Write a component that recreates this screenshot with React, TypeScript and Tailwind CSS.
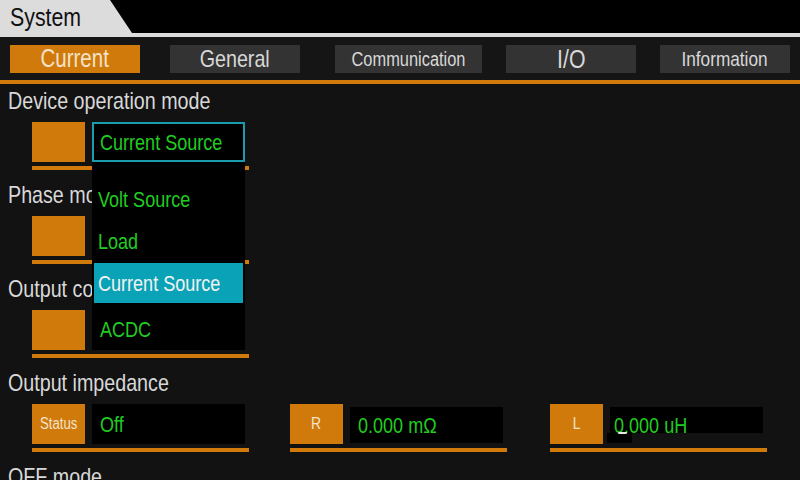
import React from "react";

const FONT = "font-['Liberation_Sans','Arial',sans-serif]";

function N({ children, center = false }: { children: React.ReactNode; center?: boolean }) {
  return (
    <span className={`inline-block whitespace-nowrap scale-x-[0.82] ${center ? "origin-center" : "origin-left"}`}>
      {children}
    </span>
  );
}

function Label({ text }: { text: string }) {
  return (
    <div className="h-[24px] text-[24px] leading-[24px] text-[#d8d8d8] whitespace-nowrap">
      <N>{text}</N>
    </div>
  );
}

function Underline() {
  return <div className="mt-[4px] h-[4px] bg-[#d07a0c] w-[217px]" />;
}

function ValueBox({ text, className = "" }: { text: string; className?: string }) {
  return (
    <div className={`w-[153px] bg-black flex items-center pl-[8px] text-[22px] text-[#20cc20] ${className}`}>
      <N>{text}</N>
    </div>
  );
}

export default function App() {
  const tabs = [
    { t: "Current", cls: "ml-[10px] w-[130px] bg-[#d07a0c] text-[#f3e2c8] text-[25px]" },
    { t: "General", cls: "ml-[30px] w-[130px] bg-[#333333] text-[#d8d8d8] text-[24px]" },
    { t: "Communication", cls: "ml-[35px] w-[147px] bg-[#333333] text-[#d8d8d8] text-[20px]" },
    { t: "I/O", cls: "ml-[24px] w-[130px] bg-[#333333] text-[#d8d8d8] text-[26px]" },
    { t: "Information", cls: "ml-[24px] w-[130px] bg-[#333333] text-[#d8d8d8] text-[21px]" },
  ];
  return (
    <div className={`relative w-[800px] h-[480px] overflow-hidden bg-[#121212] ${FONT}`}>
      <div className="h-[33px] bg-black">
        <div className="h-full w-[132px] bg-[#dcdcdc] [clip-path:polygon(0_0,110px_0,132px_100%,0_100%)] pl-[10px] text-[26px] leading-[34px] text-[#111111]">
          <N>System</N>
        </div>
      </div>
      <div className="h-[4px] bg-[#dcdcdc]" />
      <div className="h-[43px] bg-[#151515] flex pt-[8px]">
        {tabs.map((x) => (
          <div key={x.t} className={`h-[28px] flex items-center justify-center leading-none pb-[1px] ${x.cls}`}>
            <N center>{x.t}</N>
          </div>
        ))}
      </div>
      <div className="h-[4px] bg-[#d07a0c]" />

      <div className="pl-[8px] pt-[5px]">
        {/* Section 1 */}
        <div className="h-[94px]">
          <Label text="Device operation mode" />
          <div className="ml-[24px] mt-[9px] flex gap-[7px] h-[40px]">
            <div className="w-[53px] bg-[#d07a0c]" />
            <div className="w-[153px] bg-black border-2 border-[#1a9cad] flex items-center pl-[6px] text-[22px] text-[#20cc20]">
              <N>Current Source</N>
            </div>
          </div>
          <div className="ml-[24px]"><Underline /></div>
        </div>
        {/* Section 2 */}
        <div className="h-[94px]">
          <Label text="Phase mode" />
          <div className="ml-[24px] mt-[9px] flex gap-[7px] h-[40px]">
            <div className="w-[53px] bg-[#d07a0c]" />
            <ValueBox text="" />
          </div>
          <div className="ml-[24px]"><Underline /></div>
        </div>
        {/* Section 3 */}
        <div className="h-[94px]">
          <Label text="Output control" />
          <div className="ml-[24px] mt-[9px] flex gap-[7px] h-[40px]">
            <div className="w-[53px] bg-[#d07a0c]" />
            <ValueBox text="" />
          </div>
          <div className="ml-[24px]"><Underline /></div>
        </div>
        {/* Section 4 */}
        <div className="h-[94px]">
          <Label text="Output impedance" />
          <div className="mt-[9px] flex">
            <div className="ml-[24px] w-[217px]">
              <div className="flex gap-[7px] h-[40px]">
                <div className="w-[53px] bg-[#d07a0c] flex items-center justify-center text-[16px] text-[#f3e2c8]">
                  <N center>Status</N>
                </div>
                <ValueBox text="Off" />
              </div>
              <Underline />
            </div>
            <div className="ml-[41px] w-[217px]">
              <div className="flex gap-[7px] h-[40px] items-end">
                <div className="w-[53px] h-[40px] bg-[#d07a0c] flex items-center justify-center text-[17px] text-[#f3e2c8]">
                  <N center>R</N>
                </div>
                <ValueBox text="0.000 mΩ" className="h-[36px] mb-[1px] pl-[4px]" />
              </div>
              <Underline />
            </div>
            <div className="ml-[43px] w-[217px]">
              <div className="flex gap-[7px] h-[40px] items-end">
                <div className="w-[53px] h-[40px] bg-[#d07a0c] flex items-center justify-center text-[17px] text-[#f3e2c8]">
                  <N center>L</N>
                </div>
                <div className="relative w-[153px] h-[36px] mb-[1px] bg-[linear-gradient(to_bottom,#000_26px,transparent_26px)] flex items-center pl-[4px] text-[22px] text-[#20cc20]">
                  <N>0.000 uH</N>
                  <div className="absolute left-[-3px] top-[26px] w-[25px] h-[10px] bg-black" />
                  <div className="absolute left-[8px] top-[25px] w-[9px] h-[2px] bg-[#e8e8e8] rounded-full" />
                </div>
              </div>
              <Underline />
            </div>
          </div>
        </div>
        {/* Section 5 */}
        <div className="h-[94px]">
          <Label text="OFF mode" />
        </div>
      </div>

      {/* Dropdown overlay */}
      <div className="absolute left-[92px] top-[162px] w-[153px] h-[188px] bg-black pt-[17px] text-[22px]">
        <div className="h-[40px] flex items-center pl-[6px] text-[#20cc20]"><N>Volt Source</N></div>
        <div className="mt-[2px] h-[40px] flex items-center pl-[6px] text-[#20cc20]"><N>Load</N></div>
        <div className="mt-[2px] mx-[2px] h-[40px] flex items-center pl-[4px] bg-[#0aa2b6] text-[#f2f2f2]"><N>Current Source</N></div>
        <div className="mt-[6px] h-[40px] flex items-center pl-[8px] text-[#20cc20]"><N>ACDC</N></div>
      </div>
    </div>
  );
}
